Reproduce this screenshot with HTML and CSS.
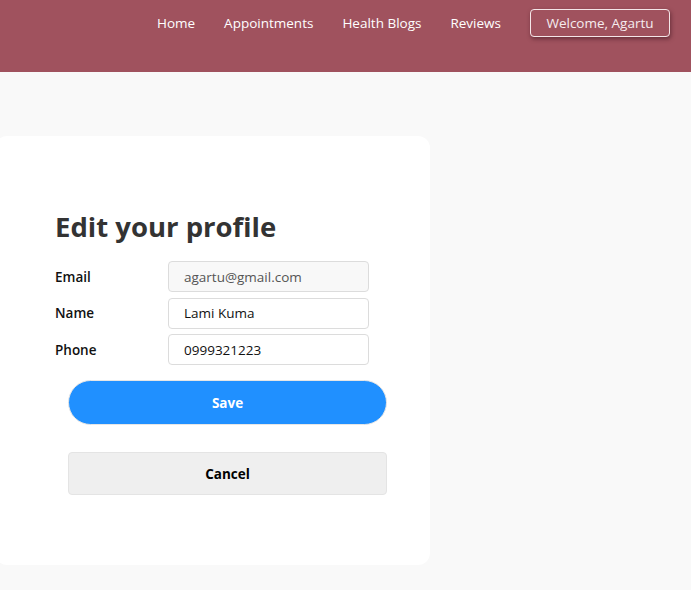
FILE: index.html
```html
<!DOCTYPE html>
<html lang="en">
<head>
<meta charset="utf-8">
<title>Edit profile</title>
<link rel="stylesheet" href="styles.css">
</head>
<body>
<header class="topbar">
  <nav class="nav">
    <a class="nav-link" href="#">Home</a>
    <a class="nav-link" href="#">Appointments</a>
    <a class="nav-link" href="#">Health Blogs</a>
    <a class="nav-link" href="#">Reviews</a>
    <button class="welcome">Welcome, Agartu</button>
  </nav>
</header>
<main class="main">
  <section class="card">
    <h1 class="title">Edit your profile</h1>
    <form class="form">
      <label class="label" for="email">Email</label>
      <input class="field field-disabled" id="email" value="agartu@gmail.com" disabled>
      <label class="label" for="name">Name</label>
      <input class="field" id="name" value="Lami Kuma">
      <label class="label" for="phone">Phone</label>
      <input class="field" id="phone" value="0999321223">
    </form>
    <div class="actions">
      <button class="btn btn-save" type="button">Save</button>
      <button class="btn btn-cancel" type="button">Cancel</button>
    </div>
  </section>
</main>
</body>
</html>
```
FILE: styles.css
```css
* { box-sizing: border-box; }
html, body { margin: 0; padding: 0; }
body {
  background: #f9f9f9;
  font-family: "Open Sans", "Noto Sans", sans-serif;
  color: #111;
  overflow: hidden;
}
.topbar {
  height: 72px;
  background: #a0525e;
}
.nav {
  display: flex;
  justify-content: flex-end;
  align-items: center;
  gap: 29px;
  padding: 9px 21px 0 0;
}
.nav-link {
  color: #fff;
  text-decoration: none;
  font-size: 13.5px;
  font-weight: 500;
  line-height: 28px;
}
.welcome {
  font-family: inherit;
  font-size: 13.5px;
  font-weight: 500;
  color: #f6ecee;
  background: transparent;
  border: 1px solid #f4e6e8;
  border-radius: 4px;
  height: 28px;
  width: 140px;
  padding: 0;
  box-shadow: 1px 2px 4px rgba(60, 20, 30, 0.55);
}
.main {
  padding-top: 64px;
}
.card {
  margin-left: -5px;
  width: 435px;
  height: 429px;
  background: #fff;
  border-radius: 12px;
  padding: 71px 0 0 60px;
}
.title {
  margin: 0 0 14px;
  font-size: 27.5px;
  line-height: 40px;
  font-weight: 700;
  color: #333;
}
.form {
  display: grid;
  grid-template-columns: 113px 201px;
  row-gap: 5.5px;
  align-items: center;
}
.label {
  font-size: 13.5px;
  line-height: 18px;
  font-weight: 600;
  color: #111;
}
.field {
  height: 31px;
  border: 1px solid #dcdcdc;
  border-radius: 4px;
  padding: 0 15px;
  font-family: inherit;
  font-size: 13.5px;
  color: #111;
  background: #fff;
}
.field-disabled {
  background: #f8f8f8;
  color: #555;
}
.actions {
  display: flex;
  flex-direction: column;
  align-items: flex-start;
  gap: 27px;
  margin-top: 15px;
}
.btn {
  font-family: inherit;
  font-size: 13.5px;
  font-weight: 700;
  cursor: pointer;
}
.btn-save {
  margin-left: 13px;
  width: 319px;
  height: 45px;
  border-radius: 23px;
  background: #2090ff;
  color: #fff;
  border: 1px solid #e6e6e6;
}
.btn-cancel {
  margin-left: 13px;
  width: 319px;
  height: 43px;
  border-radius: 4px;
  background: #efefef;
  color: #000;
  border: 1px solid #e4e4e4;
}
```
